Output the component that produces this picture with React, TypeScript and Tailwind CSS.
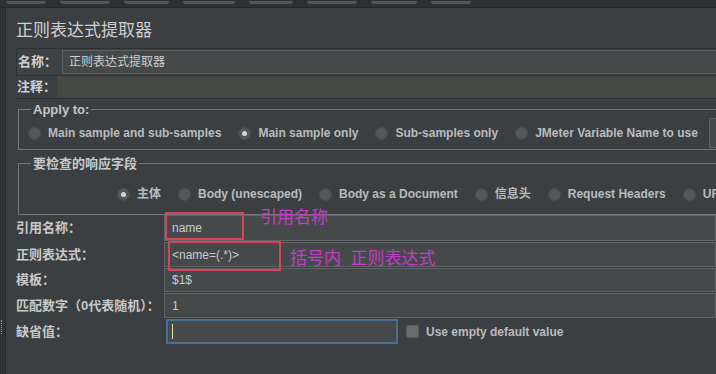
import React from "react";

const font = "font-['Liberation_Sans','Noto_Sans_CJK_SC',sans-serif]";

const Radio = ({ checked, label }: { checked?: boolean; label: string }) => (
  <div className="flex items-center gap-[7px] shrink-0">
    <span className="w-[13px] h-[13px] rounded-full bg-[#55585a] border border-[#4a4d4f] flex items-center justify-center">
      {checked && <span className="w-[5px] h-[5px] rounded-full bg-[#d6d6d6]" />}
    </span>
    <span className="text-[12px] font-bold text-[#b9bbbd] whitespace-nowrap">{label}</span>
  </div>
);

const FieldRow = ({ label, value, h = "h-[26px]" }: { label: string; value: string; h?: string }) => (
  <div className={`flex items-center ${h}`}>
    <span className="w-[148px] shrink-0 text-[13px] font-bold text-[#c8c8c8] whitespace-nowrap">{label}</span>
    <div className="flex-1 h-full bg-[#45494a] border border-[#616466] flex items-center pl-[7px] text-[12px] text-[#c9c9c9]">
      {value}
    </div>
  </div>
);

export default function App() {
  return (
    <div className={`relative w-[716px] h-[374px] overflow-hidden bg-[#3c3f41] ${font}`}>
      {/* toolbar remnant */}
      <div className="h-[8px] bg-[#2e3032] flex items-start gap-[14px] px-[6px] border-b border-[#252728]">
        {[40, 50, 45, 52, 44, 50, 46, 40].map((w, i) => (
          <span key={i} className="h-[3px] mt-[1px] rounded-b bg-[#55585a]" style={{ width: w }} />
        ))}
      </div>
      <div className="flex h-[366px]">
        <div className="w-[6px] bg-[#2f3133] border-r border-[#25272a] flex flex-col justify-end pb-[40px] items-center">
          <span className="w-[3px] h-[14px] border-l border-dotted border-[#9a9a9a]" />
        </div>
        <div className="flex-1 pl-[10px] overflow-hidden">
          <div className="pt-[12px] h-[40px] text-[17px] text-[#cfcfcf] leading-[22px]">正则表达式提取器</div>

          <div className="flex items-center h-[28px] border border-[#2f3133] bg-[#3f4244] mr-[-4px]">
            <span className="w-[45px] pl-[1px] shrink-0 text-[13px] font-bold text-[#d0d0d0] whitespace-nowrap">名称：</span>
            <div className="flex-1 h-[24px] bg-[#45494a] border border-[#5d6062] flex items-center pl-[6px] text-[12px] text-[#cfcfcf]">
              正则表达式提取器
            </div>
          </div>
          <div className="flex items-center h-[23px] border-b border-[#2c2e30]">
            <span className="w-[39px] pl-[1px] shrink-0 text-[13px] font-bold text-[#d0d0d0] whitespace-nowrap overflow-visible">注释：</span>
            <div className="flex-1 h-full ml-[2px] bg-[#464946]" />
          </div>

          <fieldset className="ml-[2px] mt-[3px] w-[720px] border border-[#74777a] pt-[7px] pb-[7px] pl-[9px]">
            <legend className="ml-[3px] px-[2px] text-[13px] font-bold text-[#c3c5c7] leading-[15px]">Apply to:</legend>
            <div className="flex items-center gap-[17px] h-[18px]">
              <Radio label="Main sample and sub-samples" />
              <Radio checked label="Main sample only" />
              <Radio label="Sub-samples only" />
              <Radio label="JMeter Variable Name to use" />
              <div className="ml-[-6px] w-[40px] h-[30px] bg-[#45494a] border border-[#5d6062]" />
            </div>
          </fieldset>

          <fieldset className="ml-[2px] mt-[6px] w-[720px] border border-[#74777a] pt-[14px] pb-[11px] pl-[9px]">
            <legend className="ml-[3px] px-[2px] text-[13px] font-bold text-[#c8c8c8] leading-[15px]">要检查的响应字段</legend>
            <div className="flex items-center gap-[17px] h-[18px] pl-[89px]">
              <Radio checked label="主体" />
              <Radio label="Body (unescaped)" />
              <Radio label="Body as a Document" />
              <Radio label="信息头" />
              <Radio label="Request Headers" />
              <Radio label="URL" />
            </div>
          </fieldset>

          <div className="flex flex-col gap-[1px]">
            <FieldRow label="引用名称：" value="name" h="h-[26px]" />
            <FieldRow label="正则表达式：" value="<name=(.*)>" h="h-[25px]" />
            <FieldRow label="模板：" value="$1$" h="h-[24px]" />
            <FieldRow label="匹配数字（0代表随机）：" value="1" h="h-[25px]" />
            <div className="flex items-center h-[25px]">
              <span className="w-[150px] shrink-0 text-[13px] font-bold text-[#c8c8c8]">缺省值：</span>
              <div className="w-[232px] h-full bg-[#45494a] border-2 border-[#4b6e95] flex items-center pl-[4px]">
                <span className="w-[1px] h-[15px] bg-[#e8e2b0]" />
              </div>
              <span className="ml-[8px] w-[13px] h-[13px] rounded-[2px] bg-[#696c6e] border border-[#5a5d5f]" />
              <span className="ml-[7px] text-[12px] font-bold text-[#b9bbbd]">Use empty default value</span>
            </div>
          </div>
        </div>
      </div>

      {/* annotations drawn over the screenshot */}
      <div className="absolute left-[165px] top-[212px] w-[79px] h-[28px] border-2 border-[#d8435c]" />
      <div className="absolute left-[168px] top-[241px] w-[113px] h-[30px] border-2 border-[#d8435c]" />
      <div className="absolute left-[260px] top-[207px] text-[17px] text-[#c43cc8] leading-[22px]">引用名称</div>
      <div className="absolute left-[290px] top-[248px] text-[17px] text-[#c43cc8] leading-[22px] whitespace-pre">括号内  正则表达式</div>
    </div>
  );
}
